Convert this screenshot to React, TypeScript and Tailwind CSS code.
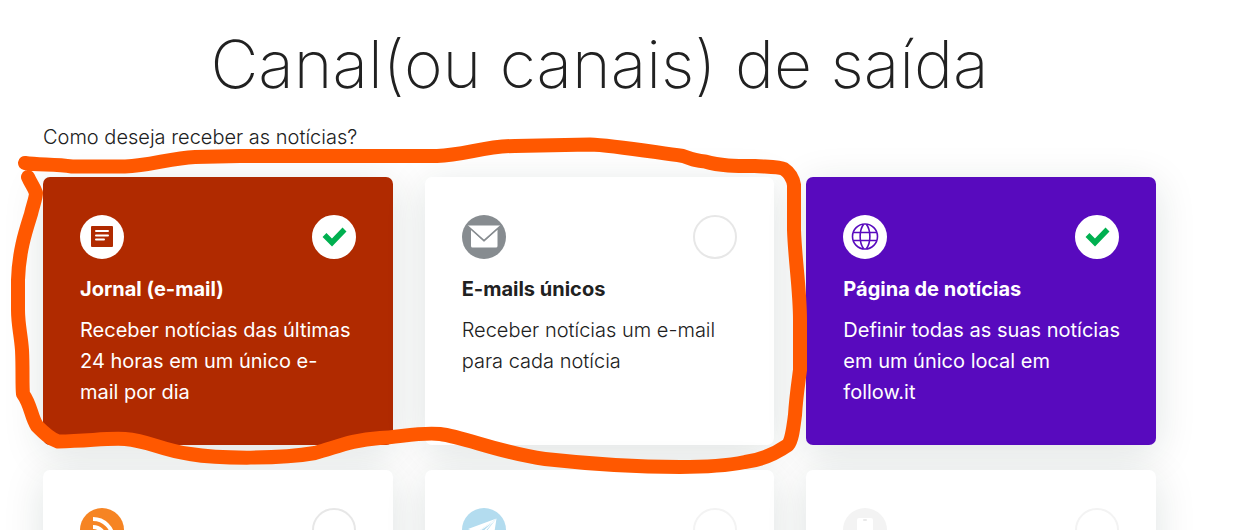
import { useState, type ReactNode } from 'react';
import clsx from 'clsx';

type Tone = 'red' | 'purple' | 'white';

type Channel = {
  id: string;
  title?: string;
  text?: string;
  icon: ReactNode;
  badge: string;
  tone: Tone;
  faded?: boolean;
};

const tones: Record<Tone, string> = {
  red: 'bg-[#b02a00] text-white font-normal',
  purple: 'bg-[#580abe] text-white font-normal',
  white: 'bg-white text-[#212121] font-light',
};

const NewspaperIcon = () => (
  <svg viewBox="0 0 44 44" className="size-full" aria-hidden="true">
    <rect x="11" y="11" width="22" height="21" rx="1" fill="#b02a00" />
    <path d="M16 16h12M16 20.500h12M16 24.500h8" stroke="#fff" strokeWidth="2" strokeLinecap="round" />
  </svg>
);

const EnvelopeIcon = () => (
  <svg viewBox="0 0 44 44" className="size-full" aria-hidden="true">
    <path d="M9 14.500 22 26.500 35.500 14.500V31a1.500 1.500 0 0 1-1.500 1.500H10.500A1.500 1.500 0 0 1 9 31z" fill="#fff" />
    <path d="M5.500 10.500h33L22 25.500z" fill="#fff" />
    <path d="M5 10.500 22 25.700 39 10.500" fill="none" stroke="#878c90" strokeWidth="1.600" />
  </svg>
);

const GlobeIcon = () => (
  <svg viewBox="0 0 44 44" className="size-full" fill="none" stroke="#580abe" strokeWidth="1.600" aria-hidden="true">
    <circle cx="22" cy="21.500" r="12.500" />
    <path d="M20.500 9.500c-4.500 6-4.500 18 0 24M23.500 9.500c4.500 6 4.500 18 0 24" />
    <path d="M10.500 17.500h23M10.500 25.500h23" />
  </svg>
);

const RssIcon = () => (
  <svg viewBox="0 0 44 44" className="size-full" fill="none" stroke="#fff" strokeWidth="4" aria-hidden="true">
    <path d="M13 11a20 20 0 0 1 20 20M13 19a12 12 0 0 1 12 12" />
    <circle cx="16" cy="29" r="2.500" fill="#fff" stroke="none" />
  </svg>
);

const PlaneIcon = () => (
  <svg viewBox="0 0 44 44" className="size-full" aria-hidden="true">
    <path d="M34.500 10.500 6 21l8.500 3.500zM34.500 10.500 31 33l-9-6.500z" fill="#fff" />
    <path d="M34.500 10.500 14.500 24.500 17 33l3-6z" fill="#fff" />
    <path d="M30.500 14.500 15.500 24.500l2 5 1-4z" fill="#b3dcef" />
  </svg>
);

const PhoneIcon = () => (
  <svg viewBox="0 0 44 44" className="size-full" aria-hidden="true">
    <rect x="14" y="10" width="16" height="26" rx="2" fill="#fff" />
    <rect x="20" y="11" width="4" height="2" rx="1" fill="#e9e9e9" />
  </svg>
);

const channels: Channel[] = [
  {
    id: 'newspaper',
    title: 'Jornal (e-mail)',
    text: 'Receber notícias das últimas\n24 horas em um único e-\nmail por dia',
    icon: <NewspaperIcon />,
    badge: 'bg-white',
    tone: 'red',
  },
  {
    id: 'single',
    title: 'E-mails únicos',
    text: 'Receber notícias um e-mail\npara cada notícia',
    icon: <EnvelopeIcon />,
    badge: 'bg-[#878c90]',
    tone: 'white',
  },
  {
    id: 'page',
    title: 'Página de notícias',
    text: 'Definir todas as suas notícias\nem um único local em\nfollow.it',
    icon: <GlobeIcon />,
    badge: 'bg-white',
    tone: 'purple',
  },
  { id: 'rss', icon: <RssIcon />, badge: 'bg-[#f68423]', tone: 'white' },
  { id: 'telegram', icon: <PlaneIcon />, badge: 'bg-[#b3dcef]', tone: 'white', faded: true },
  { id: 'phone', icon: <PhoneIcon />, badge: 'bg-[#f3f3f3]', tone: 'white', faded: true },
];

type CardProps = {
  channel: Channel;
  checked: boolean;
  onToggle: () => void;
};

function ChannelCard({ channel, checked, onToggle }: CardProps) {
  return (
    <label
      className={clsx(
        'flex min-h-[268px] flex-col rounded-[7px] pt-[38px] pr-[37px] pb-9 pl-[37px] shadow-[0_8px_40px_rgba(15,45,35,0.13)]',
        tones[channel.tone],
      )}
    >
      <span className="flex h-11 items-center justify-between">
        <span className={clsx('size-11 rounded-full', channel.badge)}>{channel.icon}</span>
        <span className="relative size-11">
          <input
            type="checkbox"
            aria-label={channel.title ?? channel.id}
            checked={checked}
            disabled={channel.faded}
            onChange={onToggle}
            className={clsx(
              'block size-11 appearance-none rounded-full border-2 bg-white checked:border-white',
              channel.faded ? 'border-[#f3f3f3]' : 'border-[#e7e7e7]',
            )}
          />
          {checked && (
            <svg viewBox="0 0 44 44" className="pointer-events-none absolute inset-0" aria-hidden="true">
              <path d="m12.500 20 7.500 7.500 12.500-13" fill="none" stroke="#00b050" strokeWidth="5.500" />
            </svg>
          )}
        </span>
      </span>
      {channel.title && <span className="mt-[15px] text-[20px] leading-[31px] font-bold">{channel.title}</span>}
      {channel.text && (
        <span className="-mr-2 mt-2.5 text-[20px] leading-[31px] whitespace-pre-line">{channel.text}</span>
      )}
    </label>
  );
}

export default function App() {
  const [selected, setSelected] = useState(['newspaper', 'page']);

  const toggle = (id: string) =>
    setSelected((prev) => (prev.includes(id) ? prev.filter((item) => item !== id) : [...prev, id]));

  return (
    <main className="relative h-screen overflow-hidden bg-white pr-[82px] pl-[43px] font-['Inter',sans-serif] text-[#212121]">
      <h1 className="pt-5 text-center text-[66px] leading-[88px] font-extralight whitespace-nowrap">
        Canal(ou canais) de saída
      </h1>
      <p className="mt-3.5 text-[20px] leading-[31px] font-light">Como deseja receber as notícias?</p>

      <div className="mt-6 grid grid-cols-3 gap-x-8 gap-y-[25px]">
        {channels.map((channel) => (
          <ChannelCard
            key={channel.id}
            channel={channel}
            checked={selected.includes(channel.id)}
            onToggle={() => toggle(channel.id)}
          />
        ))}
      </div>

      {/* Hand-drawn marker around the two e-mail options */}
      <svg
        width="1238"
        height="530"
        viewBox="0 0 1238 530"
        className="pointer-events-none absolute top-0 left-0 max-w-none"
        fill="none"
        stroke="#ff5800"
        strokeWidth="14"
        strokeLinecap="round"
        strokeLinejoin="round"
        aria-hidden="true"
      >
        <path d="M25 163C38 165 55 164 72 166.500H125C150 166 170 158 195 157L240 156H437C465 155 485 146 515 146L590 144.500C610 145 640 150 683 156C694 160 697 161 705 161.500C720 166 735 166 755 166C770 167 780 167 784 169C790 173 793 179 794 185V230C795 260 800 290 800 320V370C798 385 796 398 795 415C793 430 792 440 788 445C775 454 762 460 745 462C725 466 700 467 680 467C640 467 590 464 545 459C500 453 465 437 440 434C420 432 400 437 380 438C350 440 335 448 315 453C280 459 220 459 190 454C160 450 150 441 125 439C105 438 90 441 58 441.500C50 439 44 433 37 426C31 417 31 405 23 394C22 385 23 370 22 350C21 335 18 325 18 310V280C19 250 26 230 31 214C33 205 36 198 36 193C34 187 31 184 28 177" />
      </svg>
    </main>
  );
}
